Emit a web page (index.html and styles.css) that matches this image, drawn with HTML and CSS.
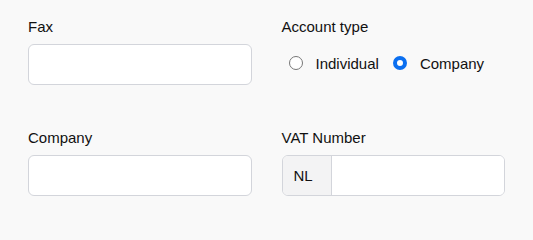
FILE: index.html
```html
<!DOCTYPE html>
<html lang="en">
<head>
<meta charset="utf-8">
<title>Form</title>
<link rel="stylesheet" href="styles.css">
</head>
<body>
<form class="form">
  <div class="field">
    <label class="label" for="fax">Fax</label>
    <input class="input" id="fax" type="text">
  </div>
  <div class="field">
    <span class="label">Account type</span>
    <div class="radios">
      <label class="radio"><input type="radio" name="acct" class="radio-input"><span>Individual</span></label>
      <label class="radio"><input type="radio" name="acct" class="radio-input" checked><span>Company</span></label>
    </div>
  </div>
  <div class="field">
    <label class="label" for="company">Company</label>
    <input class="input" id="company" type="text">
  </div>
  <div class="field">
    <label class="label" for="vat">VAT Number</label>
    <div class="group">
      <span class="addon">NL</span>
      <input class="group-input" id="vat" type="text">
    </div>
  </div>
</form>
</body>
</html>
```
FILE: styles.css
```css
html, body {
  margin: 0;
  background: #f9f9f9;
}
body {
  font-family: "Liberation Sans", Arial, sans-serif;
  font-size: 15px;
  color: #111;
}
.form {
  display: grid;
  grid-template-columns: minmax(0, 1fr) minmax(0, 1fr);
  column-gap: 30px;
  row-gap: 44px;
  padding: 18px 28px 0 28px;
}
.field {
  display: flex;
  flex-direction: column;
  min-width: 0;
}
.label {
  display: block;
  line-height: 17px;
  margin-bottom: 9px;
}
.input {
  box-sizing: border-box;
  height: 41px;
  width: 100%;
  min-width: 0;
  border: 1px solid #d3d5db;
  border-radius: 6px;
  background: #fff;
  font: inherit;
  padding: 0 12px;
  margin: 0;
  outline: none;
}
.radios {
  box-sizing: border-box;
  display: flex;
  align-items: center;
  height: 41px;
  gap: 14px;
  padding: 0 0 3px 7px;
}
.radio {
  display: flex;
  align-items: center;
  gap: 13px;
}
.radio-input {
  appearance: none;
  -webkit-appearance: none;
  box-sizing: border-box;
  width: 14px;
  height: 14px;
  margin: 0;
  border: 1px solid #777;
  border-radius: 50%;
  background: #fff;
}
.radio-input:checked {
  border: 4.5px solid #0b6ff0;
}
.group {
  display: flex;
  height: 41px;
  box-sizing: border-box;
  border: 1px solid #d3d5db;
  border-radius: 6px;
  overflow: hidden;
  background: #fff;
}
.addon {
  display: flex;
  align-items: center;
  padding: 0 18px 0 11px;
  background: #f3f3f4;
  border-right: 1px solid #d3d5db;
}
.group-input {
  flex: 1;
  min-width: 0;
  width: 0;
  border: 0;
  margin: 0;
  padding: 0 12px;
  font: inherit;
  background: #fff;
  outline: none;
}
```
